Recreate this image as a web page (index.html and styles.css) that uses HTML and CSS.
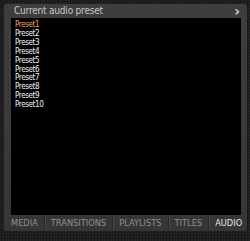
FILE: index.html
```html
<!DOCTYPE html>
<html lang="en">

<head>
    <meta charset="UTF-8">
    <title>audio preset</title>
    <link rel="stylesheet" href="styles.css">
</head>

<body>
    <div class="panel">
        <div class="titleBar">
            <span class="title">Current audio preset</span>
            <span class="arrow">&rsaquo;</span>
        </div>
        <div class="presetBox">
            <ul class="presetList">
                <li class="selected">Preset1</li>
                <li>Preset2</li>
                <li>Preset3</li>
                <li>Preset4</li>
                <li>Preset5</li>
                <li>Preset6</li>
                <li>Preset7</li>
                <li>Preset8</li>
                <li>Preset9</li>
                <li>Preset10</li>
            </ul>
        </div>
        <div class="tabs">
            <span class="tab">MEDIA</span>
            <span class="tab">TRANSITIONS</span>
            <span class="tab">PLAYLISTS</span>
            <span class="tab">TITLES</span>
            <span class="tab active">AUDIO</span>
        </div>
    </div>
</body>

</html>
```

FILE: styles.css
```css
body {
    margin: 0px;
    width: 250px;
    height: 241px;
    overflow: hidden;
    background-color: #232323;
    background-image: radial-gradient(circle, #141414 0.8px, transparent 1.2px);
    background-size: 3px 3px;
    font-family: "DejaVu Sans Condensed", "Liberation Sans", sans-serif;
}

.panel {
    margin: 4px 0px 0px 4px;
    width: 243px;
    height: 227px;
    display: flex;
    flex-direction: column;
    background-color: #3a3a3a;
    background-image: linear-gradient(#3e3e3e, #363636);
    border-radius: 3px 3px 2px 2px;
}

.titleBar {
    height: 14px;
    display: flex;
    align-items: center;
    justify-content: space-between;
    padding: 0px 7px 0px 10px;
}

.title {
    font-size: 10px;
    letter-spacing: -0.2px;
    color: #c4c4c4;
    line-height: 14px;
}

.arrow {
    font-family: "DejaVu Sans", sans-serif;
    font-size: 14px;
    font-weight: bold;
    color: #cfcfcf;
    line-height: 14px;
}

.presetBox {
    margin: 0px 6px 0px 7px;
    height: 197px;
    background-color: #000000;
}

.presetList {
    list-style: none;
    margin: 0px;
    padding: 3px 0px 0px 4px;
}

.presetList li {
    font-size: 8px;
    letter-spacing: -0.4px;
    line-height: 8.9px;
    color: #f2f2f2;
}

.presetList li.selected {
    color: #f0a15c;
}

.tabs {
    flex: 1;
    display: flex;
    align-items: center;
    padding-left: 7px;
}

.tab {
    font-size: 9.2px;
    color: #8e8e8e;
    padding: 0px 6px;
    line-height: 12px;
    border-left: 1px solid #262626;
    box-shadow: inset 1px 0px 0px #4a4a4a;
}

.tab:first-child {
    padding-left: 0px;
    border-left: none;
    box-shadow: none;
}

.tab.active {
    color: #e6e6e6;
}
```
